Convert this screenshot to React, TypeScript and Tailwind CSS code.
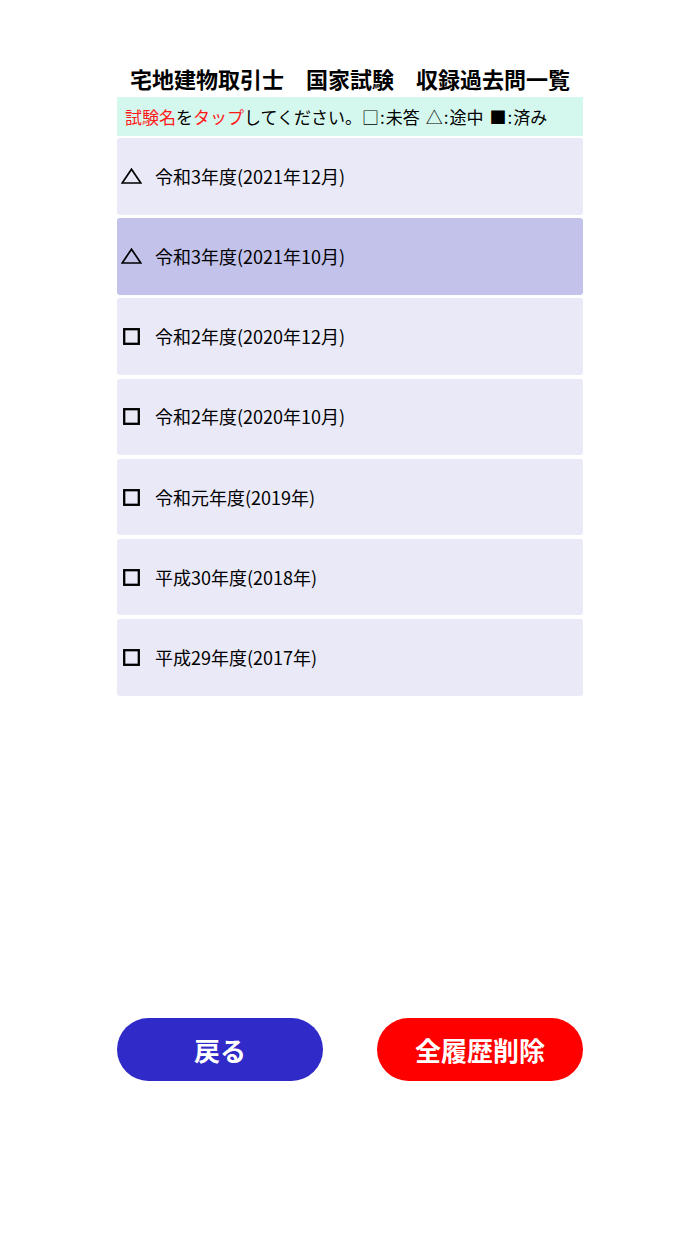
import React from "react";

const rows = [
  { mark: "tri", label: "令和3年度(2021年12月)", active: false },
  { mark: "tri", label: "令和3年度(2021年10月)", active: true },
  { mark: "box", label: "令和2年度(2020年12月)", active: false },
  { mark: "box", label: "令和2年度(2020年10月)", active: false },
  { mark: "box", label: "令和元年度(2019年)", active: false },
  { mark: "box", label: "平成30年度(2018年)", active: false },
  { mark: "box", label: "平成29年度(2017年)", active: false },
];

const Mark = ({ kind }: { kind: string }) =>
  kind === "tri" ? (
    <svg width="21" height="16" viewBox="0 0 21 16" className="shrink-0 ml-[4px]">
      <path d="M10.5 1.2 L19.8 15 L1.2 15 Z" fill="none" stroke="#000" strokeWidth="1.7" strokeLinejoin="miter" />
    </svg>
  ) : (
    <svg width="17" height="17" viewBox="0 0 17 17" className="shrink-0 ml-[6px]">
      <rect x="1.2" y="1.2" width="14.6" height="14.6" fill="none" stroke="#000" strokeWidth="2.3" />
    </svg>
  );

export default function App() {
  return (
    <div className="w-[700px] h-[1244px] bg-white text-black font-['Noto_Sans_CJK_JP',sans-serif]">
      <div className="w-[466px] mx-auto flex flex-col">
        {/* タイトル */}
        <h1 className="pt-[63px] h-[97px] text-center text-[22px] font-bold leading-[30px] whitespace-nowrap">
          宅地建物取引士　国家試験　収録過去問一覧
        </h1>

        {/* 凡例 */}
        <div className="h-[39px] bg-[#d5f8ee] flex items-center pl-[8px] text-[17px] whitespace-nowrap">
          <span className="text-[#ff1a1a]">試験名</span>
          <span>を</span>
          <span className="text-[#ff1a1a]">タップ</span>
          <span>してください。</span>
          <span>□</span>
          <span className="ml-[1px]">:</span>
          <span className="ml-[1px]">未答</span>
          <span className="ml-[6px]">△</span>
          <span className="ml-[1px]">:</span>
          <span className="ml-[1px]">途中</span>
          <span className="ml-[6px]">■</span>
          <span className="ml-[1px]">:</span>
          <span className="ml-[1px]">済み</span>
        </div>

        {/* 試験一覧 */}
        <div className="flex flex-col gap-[3.7px] pt-[2px]">
          {rows.map((r) => (
            <div
              key={r.label}
              className={`h-[76.5px] rounded-[3px] flex items-center text-[18px] ${
                r.active ? "bg-[#c3c2eb]" : "bg-[#eae9f8]"
              }`}
            >
              <div className="w-[38px] flex items-center">
                <Mark kind={r.mark} />
              </div>
              <span>{r.label}</span>
            </div>
          ))}
        </div>

        {/* ボタン */}
        <div className="mt-[322px] flex justify-between">
          <button className="w-[206px] h-[63px] rounded-full bg-[#2f2ac8] text-white text-[26px] font-bold">
            戻る
          </button>
          <button className="w-[206px] h-[63px] rounded-full bg-[#ff0000] text-white text-[26px] font-bold">
            全履歴削除
          </button>
        </div>
      </div>
    </div>
  );
}
